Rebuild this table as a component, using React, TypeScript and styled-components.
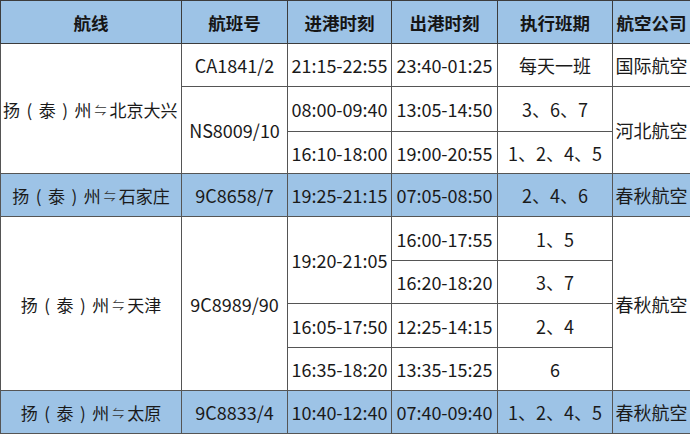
import React from "react";
import styled, { createGlobalStyle } from "styled-components";

const Global = createGlobalStyle`
  html, body { margin: 0; padding: 0; background: #ffffff; }
  body { font-family: "Noto Sans CJK SC", "Noto Sans", sans-serif; }
`;

const Table = styled.table`
  width: 690px;
  border-collapse: collapse;
  table-layout: fixed;
  color: #1a1a1a;
  font-size: 18px;
  border: 1px solid #333333;
`;

const Row = styled.tr<{ $h: number }>`
  height: ${(p) => p.$h}px;
`;

const Head = styled.th`
  background: #9dc3e6;
  font-weight: bold;
  font-size: 17.5px;
  color: #151515;
  border: 1px solid #3c3c3c;
  text-align: center;
  padding: 0;
  white-space: nowrap;
`;

const Cell = styled.td<{ $hl?: boolean; $left?: boolean }>`
  background: ${(p) => (p.$hl ? "#9dc3e6" : "#ffffff")};
  border: 1px solid #555555;
  text-align: ${(p) => (p.$left ? "left" : "center")};
  padding: ${(p) => (p.$left ? "0 0 0 2px" : "0")};
  white-space: nowrap;
  overflow: visible;
  letter-spacing: 0;
`;

const RouteText = styled.span`
  font-size: 17px;
`;

const Paren = styled.span`
  display: inline-block;
  width: 1.1em;
  text-align: center;
`;

const Arrow = styled.span`
  font-size: 12px;
  color: #333;
  margin: 0 3px;
  position: relative;
  top: -2px;
`;

const Route = ({ to }: { to: string }) => (
  <RouteText>
    扬<Paren>(</Paren>泰<Paren>)</Paren>州<Arrow>⇋</Arrow>
    {to}
  </RouteText>
);

const widths = [181, 106, 104, 106, 115, 78];

export default function App() {
  return (
    <>
      <Global />
      <Table>
        <colgroup>
          {widths.map((w, i) => (
            <col key={i} style={{ width: w }} />
          ))}
        </colgroup>
        <tbody>
          <Row $h={43}>
            <Head>航线</Head>
            <Head>航班号</Head>
            <Head>进港时刻</Head>
            <Head>出港时刻</Head>
            <Head>执行班期</Head>
            <Head>航空公司</Head>
          </Row>
          <Row $h={43}>
            <Cell rowSpan={3} $left>
              <Route to="北京大兴" />
            </Cell>
            <Cell>CA1841/2</Cell>
            <Cell>21:15-22:55</Cell>
            <Cell>23:40-01:25</Cell>
            <Cell>每天一班</Cell>
            <Cell>国际航空</Cell>
          </Row>
          <Row $h={45}>
            <Cell rowSpan={2}>NS8009/10</Cell>
            <Cell>08:00-09:40</Cell>
            <Cell>13:05-14:50</Cell>
            <Cell>3、6、7</Cell>
            <Cell rowSpan={2}>河北航空</Cell>
          </Row>
          <Row $h={42}>
            <Cell>16:10-18:00</Cell>
            <Cell>19:00-20:55</Cell>
            <Cell>1、2、4、5</Cell>
          </Row>
          <Row $h={43}>
            <Cell $hl>
              <Route to="石家庄" />
            </Cell>
            <Cell $hl>9C8658/7</Cell>
            <Cell $hl>19:25-21:15</Cell>
            <Cell $hl>07:05-08:50</Cell>
            <Cell $hl>2、4、6</Cell>
            <Cell $hl>春秋航空</Cell>
          </Row>
          <Row $h={44}>
            <Cell rowSpan={4}>
              <Route to="天津" />
            </Cell>
            <Cell rowSpan={4}>9C8989/90</Cell>
            <Cell rowSpan={2}>19:20-21:05</Cell>
            <Cell>16:00-17:55</Cell>
            <Cell>1、5</Cell>
            <Cell rowSpan={4}>春秋航空</Cell>
          </Row>
          <Row $h={43}>
            <Cell>16:20-18:20</Cell>
            <Cell>3、7</Cell>
          </Row>
          <Row $h={44}>
            <Cell>16:05-17:50</Cell>
            <Cell>12:25-14:15</Cell>
            <Cell>2、4</Cell>
          </Row>
          <Row $h={43}>
            <Cell>16:35-18:20</Cell>
            <Cell>13:35-15:25</Cell>
            <Cell>6</Cell>
          </Row>
          <Row $h={43}>
            <Cell $hl>
              <Route to="太原" />
            </Cell>
            <Cell $hl>9C8833/4</Cell>
            <Cell $hl>10:40-12:40</Cell>
            <Cell $hl>07:40-09:40</Cell>
            <Cell $hl>1、2、4、5</Cell>
            <Cell $hl>春秋航空</Cell>
          </Row>
        </tbody>
      </Table>
    </>
  );
}
